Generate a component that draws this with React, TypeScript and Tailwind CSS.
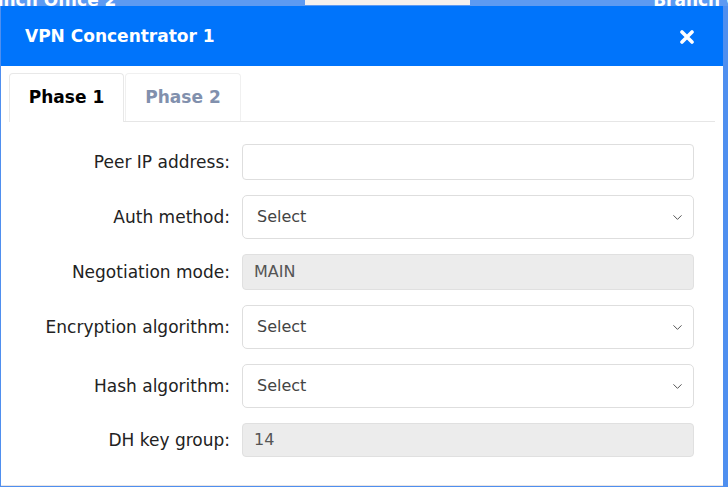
import { ChevronDown } from "lucide-react";

type Row = {
  label: string;
  kind: "input" | "select" | "readonly";
  value?: string;
};

const rows: Row[] = [
  { label: "Peer IP address:", kind: "input" },
  { label: "Auth method:", kind: "select", value: "Select" },
  { label: "Negotiation mode:", kind: "readonly", value: "MAIN" },
  { label: "Encryption algorithm:", kind: "select", value: "Select" },
  { label: "Hash algorithm:", kind: "select", value: "Select" },
  { label: "DH key group:", kind: "readonly", value: "14" },
];

function Field({ row }: { row: Row }) {
  if (row.kind === "input") {
    return <div className="h-[36px] w-[452px] rounded-[4px] border border-[#dedede] bg-white" />;
  }
  if (row.kind === "readonly") {
    return (
      <div
        className={`flex w-[452px] items-center rounded-[4px] border border-[#e0e0e0] bg-[#ececec] px-[11px] text-[16px] text-[#555] ${
          row.value === "14" ? "h-[34px]" : "h-[36px]"
        }`}
      >
        {row.value}
      </div>
    );
  }
  return (
    <div className="flex h-[44px] w-[452px] items-center justify-between rounded-[5px] border border-[#dedede] bg-white pl-[14px] pr-[8px] text-[16px] text-[#444]">
      <span>{row.value}</span>
      <ChevronDown size={15} strokeWidth={1.6} className="text-[#555]" />
    </div>
  );
}

export default function App() {
  return (
    <div
      className="flex h-[487px] w-[728px] flex-col overflow-hidden bg-[#4f8fef]"
      style={{ fontFamily: '"DejaVu Sans", Verdana, sans-serif' }}
    >
      {/* page behind the dialog */}
      <div className="flex h-[6px] shrink-0 overflow-hidden bg-[#5c9af2] text-[17px] font-bold leading-none text-white">
        <div className="w-[305px] shrink-0 overflow-hidden whitespace-nowrap">
          <span className="-ml-[8px] inline-block -translate-y-[8px]">anch Office 2</span>
        </div>
        <div className="h-[5px] w-[165px] shrink-0 bg-[#f4f1ee]" />
        <div className="flex flex-1 justify-end overflow-hidden whitespace-nowrap">
          <span className="-mr-[20px] inline-block -translate-y-[8px]">Branch Of</span>
        </div>
      </div>

      <div className="ml-[1px] flex h-[480px] w-[722px] flex-col border-b border-[#e8e4e4] bg-white">
        <div className="flex h-[60px] shrink-0 items-center justify-between bg-[#0074fb] pl-[24px] pr-[29px] pt-[2px] text-white">
          <span className="text-[17px] font-bold">VPN Concentrator 1</span>
          <svg width="14" height="14" viewBox="0 0 14 14" aria-label="close">
            <path d="M2 2 L12 12 M12 2 L2 12" stroke="white" strokeWidth="3.6" strokeLinecap="round" />
          </svg>
        </div>

        <div className="mx-[8px] mt-[7px] flex h-[49px] border-b border-[#e6e6e6]">
          <div className="-mb-px flex w-[115px] items-center justify-center rounded-t-[4px] border border-b-0 border-[#e8e8e8] bg-white text-[17px] font-bold text-black">
            Phase 1
          </div>
          <div className="ml-[1px] flex w-[116px] items-center justify-center rounded-t-[4px] border border-b-0 border-[#f0f0f0] text-[17px] font-bold text-[#8190ad]">
            Phase 2
          </div>
        </div>

        <div className="mt-[22px] flex flex-col gap-[15px]">
          {rows.map((row) => (
            <div key={row.label} className="flex items-center">
              <label className="w-[229px] whitespace-nowrap pt-[2px] text-right text-[17px] text-[#222]">{row.label}</label>
              <div className="ml-[12px]">
                <Field row={row} />
              </div>
            </div>
          ))}
        </div>
      </div>
    </div>
  );
}
